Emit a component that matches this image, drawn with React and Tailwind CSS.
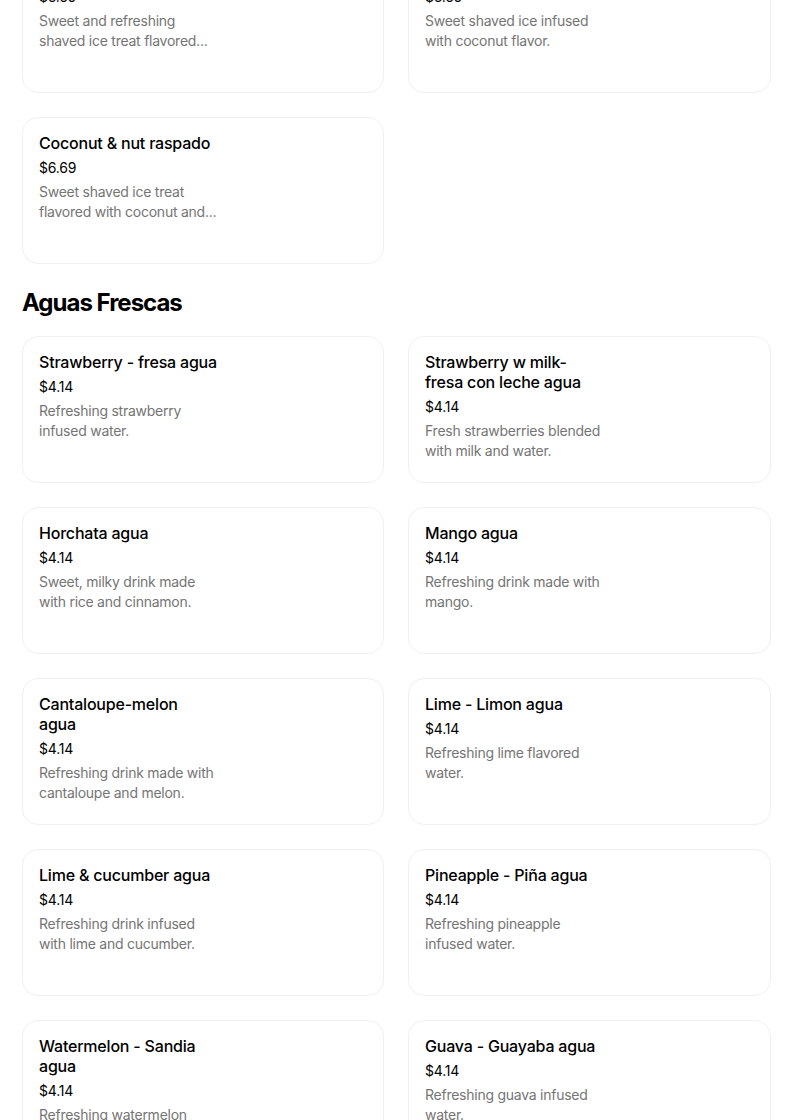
import React from 'react';

const TOP_ITEMS = [
  { name: ['Mango raspado'], price: '$6.69', desc: ['Sweet and refreshing', 'shaved ice treat flavored...'] },
  { name: ['Coconut raspado'], price: '$6.69', desc: ['Sweet shaved ice infused', 'with coconut flavor.'] },
  { name: ['Coconut & nut raspado'], price: '$6.69', desc: ['Sweet shaved ice treat', 'flavored with coconut and...'] },
];

const AGUAS = [
  { name: ['Strawberry - fresa agua'], price: '$4.14', desc: ['Refreshing strawberry', 'infused water.'] },
  { name: ['Strawberry w milk-', 'fresa con leche agua'], price: '$4.14', desc: ['Fresh strawberries blended', 'with milk and water.'] },
  { name: ['Horchata agua'], price: '$4.14', desc: ['Sweet, milky drink made', 'with rice and cinnamon.'] },
  { name: ['Mango agua'], price: '$4.14', desc: ['Refreshing drink made with', 'mango.'] },
  { name: ['Cantaloupe-melon', 'agua'], price: '$4.14', desc: ['Refreshing drink made with', 'cantaloupe and melon.'] },
  { name: ['Lime - Limon agua'], price: '$4.14', desc: ['Refreshing lime flavored', 'water.'] },
  { name: ['Lime & cucumber agua'], price: '$4.14', desc: ['Refreshing drink infused', 'with lime and cucumber.'] },
  { name: ['Pineapple - Piña agua'], price: '$4.14', desc: ['Refreshing pineapple', 'infused water.'] },
  { name: ['Watermelon - Sandia', 'agua'], price: '$4.14', desc: ['Refreshing watermelon', 'infused water.'] },
  { name: ['Guava - Guayaba agua'], price: '$4.14', desc: ['Refreshing guava infused', 'water.'] },
];

export default function App() {
  return (
    <div className="bg-white min-h-screen overflow-hidden pl-[22px] font-['Inter','Liberation_Sans',sans-serif]">
      {/* Raspados (scrolled past) */}
      <div className="grid grid-cols-[362px_363px] gap-6 -mt-[54px]">
        {TOP_ITEMS.map((item, i) => (
          <ItemCard key={i} item={item} />
        ))}
      </div>

      <h2 className="mt-[23px] mb-[17px] text-[24px] leading-8 font-bold tracking-[-1px] text-black">
        Aguas Frescas
      </h2>

      <div className="grid grid-cols-[362px_363px] gap-6 pb-10">
        {AGUAS.map((item, i) => (
          <ItemCard key={i} item={item} />
        ))}
      </div>
    </div>
  );
}

function ItemCard({ item }) {
  return (
    <div className="h-[147px] rounded-2xl border border-[#f0f0f0] bg-white pl-[16px] pt-[15px]">
      <h3 className="text-[16px] leading-5 font-medium tracking-[-0.2px] text-black">
        {item.name.map((line, i) => (
          <span key={i} className="block whitespace-nowrap">{line}</span>
        ))}
      </h3>
      <p className="mt-[5px] text-[14px] leading-5 tracking-[-0.2px] text-black">{item.price}</p>
      <p className="mt-1 text-[14px] leading-5 tracking-[-0.25px] text-[#757575]">
        {item.desc.map((line, i) => (
          <span key={i} className="block whitespace-nowrap">{line}</span>
        ))}
      </p>
    </div>
  );
}
